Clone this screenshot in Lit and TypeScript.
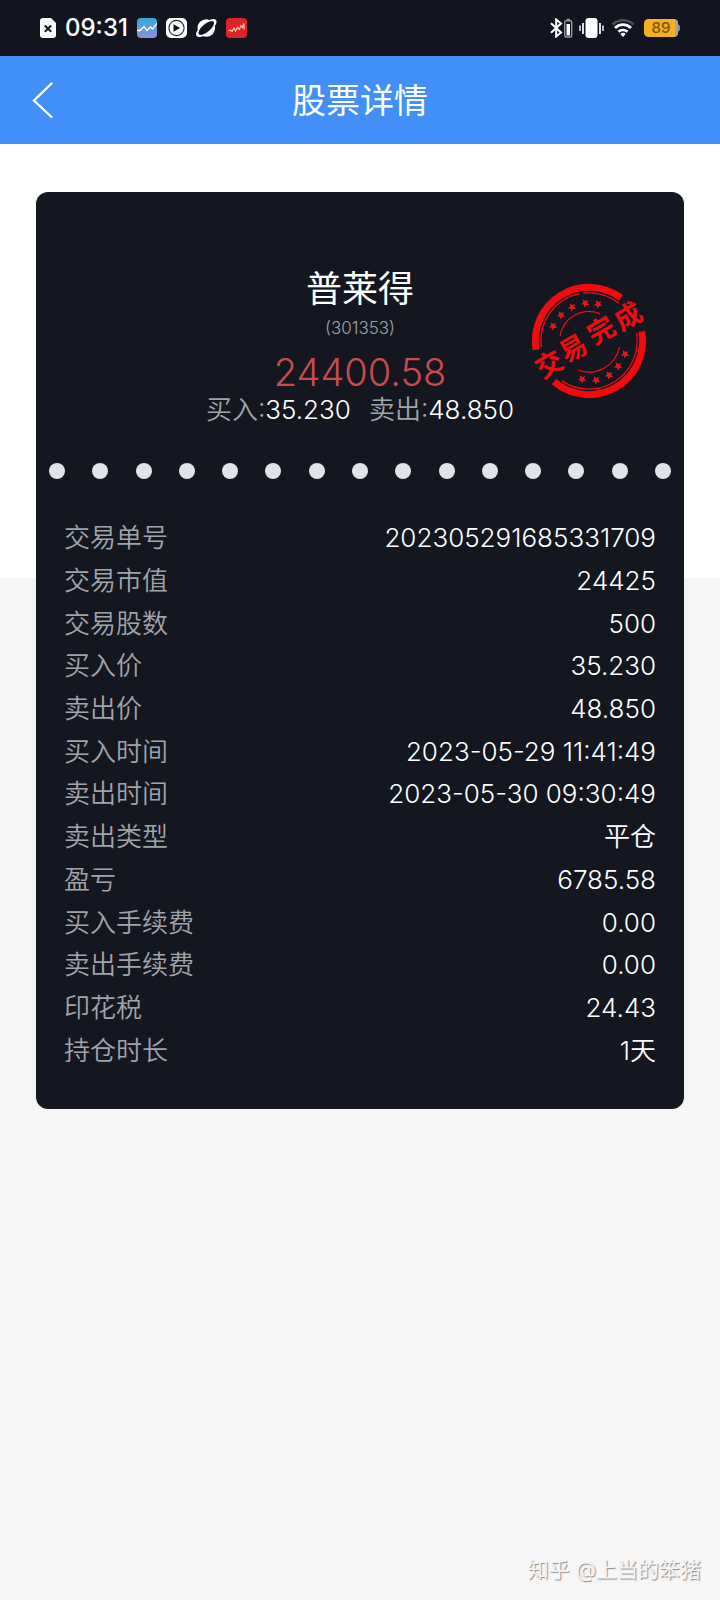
import { LitElement, html, css, svg } from "lit";
import { customElement } from "lit/decorators.js";

const DETAILS: [string, string][] = [
  ["交易单号", "202305291685331709"],
  ["交易市值", "24425"],
  ["交易股数", "500"],
  ["买入价", "35.230"],
  ["卖出价", "48.850"],
  ["买入时间", "2023-05-29 11:41:49"],
  ["卖出时间", "2023-05-30 09:30:49"],
  ["卖出类型", "平仓"],
  ["盈亏", "6785.58"],
  ["买入手续费", "0.00"],
  ["卖出手续费", "0.00"],
  ["印花税", "24.43"],
  ["持仓时长", "1天"],
];

@customElement("status-bar")
class StatusBar extends LitElement {
  static styles = css`
    :host {
      display: flex;
      justify-content: space-between;
      align-items: center;
      height: 56px;
      padding: 0 40px;
      box-sizing: border-box;
      background: #12151f;
      color: #fff;
    }
    .side {
      display: flex;
      align-items: center;
    }
    .left {
      gap: 9px;
    }
    .time {
      font-size: 24px;
      font-weight: 500;
      line-height: 28px;
    }
    .right {
      gap: 6px;
    }
    svg {
      display: block;
      flex: none;
    }
    .level {
      font-size: 15px;
      font-weight: 500;
    }
  `;
  render() {
    return html`
      <div class="side left">
        <svg width="16" height="20" viewBox="0 0 16 20">
          <path d="M3 0H11L16 5V17a3 3 0 0 1-3 3H3a3 3 0 0 1-3-3V3a3 3 0 0 1 3-3z" fill="#fff" />
          <path d="M4.8 7.5l6.4 6.4M11.2 7.5l-6.4 6.4" stroke="#12151f" stroke-width="2" />
        </svg>
        <span class="time">09:31</span>
        <svg width="20" height="20" viewBox="0 0 20 20">
          <defs>
            <linearGradient id="sky" x1="0" y1="0" x2="0" y2="1">
              <stop offset="0" stop-color="#2fa9dc" />
              <stop offset="1" stop-color="#8c8fd8" />
            </linearGradient>
          </defs>
          <rect width="20" height="20" rx="4" fill="url(#sky)" />
          <path d="M0 12.5L3 12.5 7 8.5 10 12.5 13.5 9 15.5 11 20 5.5" fill="none" stroke="#fff" stroke-width="1.3" />
        </svg>
        <svg width="21" height="20" viewBox="0 0 21 20">
          <rect width="21" height="20" rx="5" fill="#fff" />
          <circle cx="10.5" cy="10" r="7.6" fill="none" stroke="#222632" stroke-width="1.1" />
          <path d="M7.5 6.2L14.2 10 7.5 13.8z" fill="#12151f" />
        </svg>
        <svg width="21" height="20" viewBox="0 0 21 20">
          <circle cx="10.3" cy="10" r="8.8" fill="#fff" />
          <ellipse cx="10.3" cy="10" rx="12.6" ry="5.2" transform="rotate(-40 10.3 10)" fill="#fff" />
          <ellipse cx="10.3" cy="10" rx="9.6" ry="4" transform="rotate(-40 10.3 10)" fill="#12151f" />
        </svg>
        <svg width="21" height="20" viewBox="0 0 21 20">
          <rect width="21" height="20" rx="4" fill="#dd2429" />
          <path d="M2.5 13l2-1 1.5 1.5L8 10l1.5 3 2-3.5 2 2 1.5-4 1.5 2 1.5-4v6" fill="none" stroke="#f7c4ae" stroke-width="1.2" />
        </svg>
      </div>
      <div class="side right">
        <svg width="23" height="20" viewBox="0 0 23 20">
          <path d="M1 5.2L11 14.5 6.2 18.5V1.5L11 5.5 1 14.8" fill="none" stroke="#fff" stroke-width="2" />
          <rect x="14.7" y="2.7" width="7" height="16.3" rx="1.5" fill="none" stroke="#9699a0" stroke-width="1.4" />
          <path d="M16.5 0.8h3.5v1.5h-3.5z" fill="#9699a0" />
          <path d="M16.5 6h3.5v11.5h-3.5z" fill="#fff" />
        </svg>
        <svg width="25" height="20" viewBox="0 0 25 20">
          <rect x="6.5" y="0" width="12" height="20" rx="3" fill="#fff" />
          <path d="M4 5v11M21 5v11" stroke="#fff" stroke-width="1.7" />
          <path d="M1 7.5v5.5M24 7.5v5.5" stroke="#fff" stroke-width="1.4" />
        </svg>
        <svg width="28" height="20" viewBox="0 0 28 20">
          <path d="M2.5 6.5a15 15 0 0 1 21 0" fill="none" stroke="#4b4e57" stroke-width="2.6" />
          <path d="M5 10a11 11 0 0 1 16 0M8.5 13.8a6.5 6.5 0 0 1 9 0" fill="none" stroke="#fff" stroke-width="2.7" />
          <path d="M10.3 16a4 4 0 0 1 5.4 0L13 19z" fill="#fff" />
        </svg>
        <svg width="36" height="20" viewBox="0 0 36 20">
          <path d="M32 6c3 0 4 1 4 4s-1 4-4 4z" fill="#8d9096" />
          <rect x="0" y="1" width="34" height="18" rx="4.5" fill="#f5b021" />
          <path d="M31 1.2c2 .5 3 2 3 3.8v10c0 1.8-1 3.3-3 3.8z" fill="#a9a59a" />
          <text class="level" x="17" y="15" text-anchor="middle" fill="#7d5205">89</text>
        </svg>
      </div>
    `;
  }
}

@customElement("nav-header")
class NavHeader extends LitElement {
  static styles = css`
    :host {
      display: grid;
      grid-template-columns: 88px 1fr 88px;
      align-items: center;
      height: 88px;
      background: #418ff7;
      color: #fff;
    }
    .back {
      display: flex;
      align-items: center;
      height: 88px;
      padding: 0 0 0 32px;
      border: 0;
      background: none;
      color: inherit;
      cursor: pointer;
    }
    .title {
      margin: 0;
      padding-top: 2px;
      font-size: 34px;
      font-weight: 400;
      line-height: 48px;
      text-align: center;
    }
  `;
  render() {
    return html`
      <button class="back" aria-label="返回">
        <svg width="22" height="36" viewBox="0 0 22 36">
          <path d="M19.5 1.5L2 18.5 19.5 35" fill="none" stroke="#fff" stroke-width="2.4" stroke-linecap="round" />
        </svg>
      </button>
      <h1 class="title">股票详情</h1>
    `;
  }
}

const STARS: [number, number][] = [
  [-36, -15], [-28, -26], [-17, -34], [-4, -38], [9, -37],
  [36, 13], [29, 25], [20, 34], [7, 39], [-7, 38],
];
const STAMP_CHARS: [string, number, number][] = [
  ["交", -40, 23],
  ["易", -16, 7],
  ["完", 12, -11],
  ["成", 39, -25],
];

@customElement("done-stamp")
class DoneStamp extends LitElement {
  static styles = css`
    :host {
      display: block;
    }
    svg {
      display: block;
    }
    .char {
      font-size: 27px;
      font-weight: 700;
    }
  `;
  render() {
    return html`
      <svg width="128" height="128" viewBox="-64 -64 128 128">
        <g fill="none" stroke="#f20a0d">
          <path d="M-53 8.7A53.7 53.7 0 0 1 32 -43.1M52.8 -9.5A53.7 53.7 0 0 1 -35 40.7" stroke-width="7" />
          <g stroke-width="1.3">
            <path d="M-47.8 6A48.2 48.2 0 0 1 -9 -47.4M-6 -47.8A48.2 48.2 0 0 1 30 -37.7" />
            <path d="M47.5 -8A48.2 48.2 0 0 1 -27 39.9" />
            <path d="M-29 -5A29.4 29.4 0 0 1 11 -27.3M30.5 6A31 31 0 0 1 -11 29" />
          </g>
        </g>
        ${STARS.map(
          ([x, y]) => svg`<path transform="translate(${x} ${y}) rotate(-30)" fill="#e0171a"
            d="M0-4.2L1.4-1.5 4.2-1 2 .9 2.6 3.7 0 2.4-2.6 3.7-2 .9-4.2-1-1.4-1.5z" />`
        )}
        ${STAMP_CHARS.map(
          ([c, x, y]) => svg`<text class="char" transform="translate(${x} ${y}) rotate(-30)" y="10"
            text-anchor="middle" fill="#f20a0d">${c}</text>`
        )}
      </svg>
    `;
  }
}

@customElement("trade-card")
class TradeCard extends LitElement {
  static styles = css`
    :host {
      display: block;
      position: relative;
      padding: 72px 0 37px;
      border-radius: 12px;
      background: #14171f;
      color: #fff;
      font-weight: 350;
    }
    .summary {
      display: flex;
      flex-direction: column;
      align-items: center;
    }
    .name {
      margin: 0;
      font-size: 36px;
      font-weight: 400;
      line-height: 50px;
    }
    .code {
      font-size: 17px;
      line-height: 28px;
      color: #a0a3ab;
    }
    .amount {
      margin-top: 7px;
      font-size: 38px;
      line-height: 46px;
      color: #c94b4d;
    }
    .prices {
      display: flex;
      gap: 18px;
      font-size: 26px;
      line-height: 30px;
    }
    .key {
      color: #a0a3ab;
    }
    .stamp {
      position: absolute;
      top: 85px;
      right: 31px;
    }
    .dots {
      display: flex;
      justify-content: space-between;
      padding: 0 13px;
      margin: 38px 0;
    }
    .dot {
      width: 16px;
      height: 16px;
      border-radius: 50%;
      background: #e1e3ea;
    }
    .details {
      display: grid;
      grid-auto-rows: 1fr;
      min-height: 555px;
      margin: 0;
      padding: 0 28px;
    }
    .row {
      display: flex;
      justify-content: space-between;
      align-items: center;
      font-size: 26px;
      line-height: 40px;
    }
    .row dt {
      color: #a0a3ab;
    }
    .row dd {
      margin: 0;
    }
  `;
  render() {
    return html`
      <div class="summary">
        <h2 class="name">普莱得</h2>
        <div class="code">(301353)</div>
        <div class="amount">24400.58</div>
        <div class="prices">
          <span><span class="key">买入:</span>35.230</span>
          <span><span class="key">卖出:</span>48.850</span>
        </div>
      </div>
      <done-stamp class="stamp"></done-stamp>
      <div class="dots">${Array.from({ length: 15 }, () => html`<span class="dot"></span>`)}</div>
      <dl class="details">
        ${DETAILS.map(([k, v]) => html`<div class="row"><dt>${k}</dt><dd>${v}</dd></div>`)}
      </dl>
    `;
  }
}

@customElement("app-root")
class AppRoot extends LitElement {
  static styles = css`
    :host {
      display: flex;
      flex-direction: column;
      min-height: 100vh;
      background: #f6f6f6;
      font-family: Inter, "Noto Sans CJK SC", sans-serif;
    }
    .content {
      padding: 48px 36px;
      background: linear-gradient(#fff 434px, #f6f6f6 434px);
    }
    .watermark {
      margin-top: auto;
      padding: 0 19px 14px;
      font-size: 21px;
      line-height: 32px;
      text-align: right;
      color: #f4f4f4;
      text-shadow: 1px 1px 1px #8c8c8c;
    }
  `;
  render() {
    return html`
      <status-bar></status-bar>
      <nav-header></nav-header>
      <main class="content"><trade-card></trade-card></main>
      <footer class="watermark">知乎 @上当的笨猪</footer>
    `;
  }
}
